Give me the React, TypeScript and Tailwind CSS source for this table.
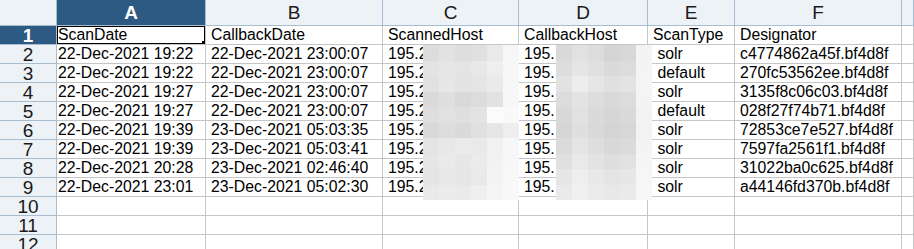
const cols = ["A", "B", "C", "D", "E", "F", ""];

const rows: string[][] = [
  ["ScanDate", "CallbackDate", "ScannedHost", "CallbackHost", "ScanType", "Designator"],
  ["22-Dec-2021 19:22", "22-Dec-2021 23:00:07", "195.2", "195.", " solr", "c4774862a45f.bf4d8f"],
  ["22-Dec-2021 19:22", "22-Dec-2021 23:00:07", "195.2", "195.", " default", "270fc53562ee.bf4d8f"],
  ["22-Dec-2021 19:27", "22-Dec-2021 23:00:07", "195.2", "195.", " solr", "3135f8c06c03.bf4d8f"],
  ["22-Dec-2021 19:27", "22-Dec-2021 23:00:07", "195.2", "195.", " default", "028f27f74b71.bf4d8f"],
  ["22-Dec-2021 19:39", "23-Dec-2021 05:03:35", "195.2", "195.", " solr", "72853ce7e527.bf4d8f"],
  ["22-Dec-2021 19:39", "23-Dec-2021 05:03:41", "195.2", "195.", " solr", "7597fa2561f1.bf4d8f"],
  ["22-Dec-2021 20:28", "23-Dec-2021 02:46:40", "195.2", "195.", " solr", "31022ba0c625.bf4d8f"],
  ["22-Dec-2021 23:01", "23-Dec-2021 05:02:30", "195.2", "195.", " solr", "a44146fd370b.bf4d8f"],
  [],
  [],
  [],
];

// pixelated redaction shades, row by row
const mosaicC = [
  ["#dcdcdc", "#e2e2e2", "#dedede", "#e0e0e0", "#e9e9e9", "#f6f6f6"],
  ["#e3e3e3", "#e6e6e6", "#e4e4e4", "#e8e8e8", "#eeeeee", "#f7f7f7"],
  ["#e1e1e1", "#e7e7e7", "#e3e3e3", "#e5e5e5", "#eaeaea", "#f7f7f7"],
  ["#dadada", "#dfdfdf", "#d9d9d9", "#dcdcdc", "#e2e2e2", "#f7f7f7"],
  ["#dedede", "#e1e1e1", "#dfdfdf", "#e3e3e3", "#fbfbfb", "#f9f9f9"],
  ["#d9d9d9", "#dddddd", "#dadada", "#e0e0e0", "#e6e6e6", "#eeeeee"],
  ["#e4e4e4", "#e8e8e8", "#ebebeb", "#e9e9e9", "#f1f1f1", "#f7f7f7"],
  ["#e6e6e6", "#eaeaea", "#e7e7e7", "#ebebeb", "#f2f2f2", "#f7f7f7"],
  ["#e5e5e5", "#e8e8e8", "#e6e6e6", "#e9e9e9", "#f3f3f3", "#f8f8f8"],
  ["#e9e9e9", "#ececec", "#eaeaea", "#efefef", "#f5f5f5", "#f9f9f9"],
];

const mosaicD = [
  ["#d9d9d9", "#e1e1e1", "#dcdcdc", "#d5d5d5", "#d8d8d8", "#f4f4f4"],
  ["#dddddd", "#e5e5e5", "#e0e0e0", "#dadada", "#dcdcdc", "#f4f4f4"],
  ["#e2e2e2", "#ededed", "#e6e6e6", "#e0e0e0", "#e3e3e3", "#f5f5f5"],
  ["#dcdcdc", "#e3e3e3", "#dddddd", "#d9d9d9", "#dcdcdc", "#f4f4f4"],
  ["#d8d8d8", "#e1e1e1", "#dadada", "#d6d6d6", "#dadada", "#f3f3f3"],
  ["#d6d6d6", "#dfdfdf", "#d9d9d9", "#d4d4d4", "#d7d7d7", "#f3f3f3"],
  ["#dbdbdb", "#e4e4e4", "#dedede", "#d8d8d8", "#dbdbdb", "#f4f4f4"],
  ["#e0e0e0", "#e9e9e9", "#e3e3e3", "#dedede", "#e1e1e1", "#f5f5f5"],
  ["#e6e6e6", "#eeeeee", "#e8e8e8", "#e4e4e4", "#e7e7e7", "#f6f6f6"],
  ["#eaeaea", "#f0f0f0", "#ebebeb", "#e8e8e8", "#eaeaea", "#f7f7f7"],
];

function Mosaic({ shades, className }: { shades: string[][]; className: string }) {
  return (
    <div className={`absolute flex flex-col ${className}`}>
      {shades.map((r, i) => (
        <div key={i} className="flex">
          {r.map((c, j) => (
            <div key={j} className="h-[15.5px] w-4" style={{ backgroundColor: c }} />
          ))}
        </div>
      ))}
    </div>
  );
}

export default function App() {
  return (
    <div className="relative h-[249px] w-[914px] overflow-hidden bg-white font-['Liberation_Sans',Arial,sans-serif] text-black">
      <div className="grid grid-cols-[57px_149px_177px_136px_129px_87px_167px_12px] grid-rows-[26px_repeat(12,19px)]">
        {/* header row */}
        <div className="border-r border-b border-[#a9bdd0] bg-[#edf2f6]" />
        {cols.map((c, i) => (
          <div
            key={i}
            className={`flex items-center justify-center border-r border-b border-[#a9bdd0] text-[19px] leading-none ${
              i === 0 ? "bg-[#2d5a82] font-bold text-white" : "bg-[#edf2f6] text-[#1a1a1a]"
            }`}
          >
            {c}
          </div>
        ))}

        {rows.map((r, ri) => (
          <Row key={ri} n={ri + 1} cells={r} />
        ))}
      </div>

      <Mosaic shades={mosaicC} className="left-[423px] top-[45px]" />
      <Mosaic shades={mosaicD} className="left-[556px] top-[45px]" />
    </div>
  );
}

function Row({ n, cells }: { n: number; cells: string[] }) {
  const first = n === 1;
  return (
    <>
      <div
        className={`flex items-center justify-center border-r border-b border-[#a9bdd0] text-[19px] leading-none ${
          first ? "bg-[#2d5a82] font-bold text-white" : "bg-[#edf2f6] text-[#1a1a1a]"
        }`}
      >
        {n}
      </div>
      {Array.from({ length: 7 }).map((_, ci) => (
        <div
          key={ci}
          className={`relative overflow-hidden whitespace-pre border-r border-b border-[#c6c6c6] text-[15.8px] leading-[18px] ${
            ci === 0 ? "pl-[1px]" : "pl-[5px]"
          }`}
        >
          {cells[ci] ?? ""}
          {first && ci === 0 && (
            <>
              <div className="pointer-events-none absolute -top-px -left-px right-[-1px] bottom-[-1px] border-2 border-black" />
              <div className="absolute right-[-2px] bottom-[-2px] h-[5px] w-[5px] bg-black" />
            </>
          )}
        </div>
      ))}
    </>
  );
}
